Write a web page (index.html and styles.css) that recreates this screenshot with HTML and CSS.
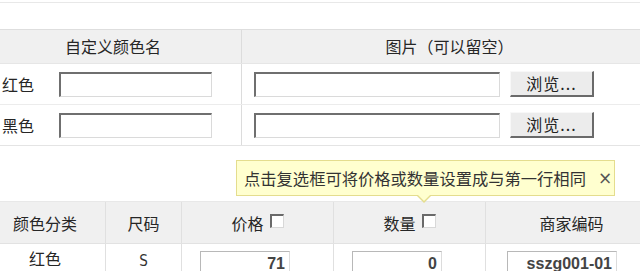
FILE: index.html
```html
<!DOCTYPE html>
<html lang="zh-CN">
<head>
<meta charset="utf-8">
<link rel="stylesheet" href="styles.css">
</head>
<body>
<div class="page">
  <div class="topline"></div>

  <div class="colors">
    <div class="c-row c-head">
      <div class="c-name">自定义颜色名</div>
      <div class="c-pic">图片（可以留空）</div>
    </div>
    <div class="c-row">
      <div class="c-name cell">
        <span class="lbl">红色</span>
        <span class="inset name-input"></span>
      </div>
      <div class="c-pic cell">
        <span class="inset file-input"></span>
        <span class="btn">浏览...</span>
      </div>
    </div>
    <div class="c-row">
      <div class="c-name cell">
        <span class="lbl">黑色</span>
        <span class="inset name-input"></span>
      </div>
      <div class="c-pic cell">
        <span class="inset file-input"></span>
        <span class="btn">浏览...</span>
      </div>
    </div>
  </div>

  <div class="gap">
    <div class="tip">
      <span class="tip-text">点击复选框可将价格或数量设置成与第一行相同</span>
      <span class="tip-close">×</span>
    </div>
  </div>

  <div class="sku">
    <div class="s-row s-head">
      <div class="s-col s1">颜色分类</div>
      <div class="s-col s2">尺码</div>
      <div class="s-col s3">价格 <span class="chk"></span></div>
      <div class="s-col s4">数量 <span class="chk"></span></div>
      <div class="s-col s5">商家编码</div>
    </div>
    <div class="s-row s-body">
      <div class="s-col s1 txt">红色</div>
      <div class="s-col s2 txt latin">S</div>
      <div class="s-col s3 left"><span class="num">71</span></div>
      <div class="s-col s4 left"><span class="num">0</span></div>
      <div class="s-col s5 left"><span class="num code">sszg001-01</span></div>
    </div>
  </div>
</div>
</body>
</html>
```

FILE: styles.css
```css
html, body {
  margin: 0;
  padding: 0;
  background: #fff;
  overflow: hidden;
}
body {
  width: 640px;
  height: 271px;
  font-family: "Noto Sans CJK SC", "Microsoft YaHei", sans-serif;
  font-size: 16px;
  color: #262626;
}
.page {
  width: 672px;
  margin-left: -15px;
}
.topline {
  height: 2px;
  border-bottom: 1px solid #e8e8e8;
  margin-bottom: 26px;
}

/* colour table */
.colors {
  border-top: 1px solid #dedede;
  border-bottom: 1px solid #e4e4e4;
}
.c-row {
  display: flex;
  height: 40px;
  border-bottom: 1px solid #ececec;
}
.c-row:last-child { border-bottom: none; }
.c-head {
  height: 33px;
  background: #f0f0f0;
  border-bottom: 1px solid #e6e6e6;
  line-height: 33px;
}
.c-name {
  width: 256px;
  border-right: 1px solid #dcdcdc;
  text-align: center;
}
.c-pic {
  flex: 1;
  text-align: center;
}
.cell {
  display: flex;
  align-items: center;
  text-align: left;
}
.c-name.cell { padding-left: 17px; width: 239px; }
.c-pic.cell { padding-left: 12px; }
.lbl {
  width: 57px;
  line-height: 20px;
}
.inset {
  display: block;
  box-sizing: border-box;
  height: 25px;
  background: #fff;
  border-top: 2px solid #6f6f6f;
  border-left: 2px solid #6f6f6f;
  border-right: 1px solid #dadada;
  border-bottom: 1px solid #dadada;
}
.name-input { width: 153px; }
.file-input { width: 246px; }
.btn {
  box-sizing: border-box;
  width: 84px;
  height: 26px;
  margin-left: 10px;
  background: #ececec;
  border-top: 1px solid #f8f8f8;
  border-left: 1px solid #f8f8f8;
  border-right: 2px solid #6a6a6a;
  border-bottom: 2px solid #6a6a6a;
  line-height: 22px;
  text-align: center;
  font-size: 16px;
  color: #222;
  letter-spacing: 1px;
}

/* gap + tooltip */
.gap {
  position: relative;
  height: 55px;
}
.tip {
  position: absolute;
  left: 251px;
  top: 14px;
  width: 379px;
  height: 36px;
  box-sizing: border-box;
  background: #ffffcf;
  border: 1px solid #e4dd8e;
  display: flex;
  align-items: center;
  padding-left: 7px;
  font-size: 16.3px;
  line-height: 20px;
  color: #333;
}
.tip::after {
  content: "";
  position: absolute;
  left: 179px;
  bottom: -8px;
  border-left: 8px solid transparent;
  border-right: 8px solid transparent;
  border-top: 8px solid #e4dd8e;
}
.tip::before {
  content: "";
  position: absolute;
  left: 180px;
  bottom: -6px;
  z-index: 1;
  border-left: 7px solid transparent;
  border-right: 7px solid transparent;
  border-top: 7px solid #ffffcf;
}
.tip-close {
  margin-left: 12px;
  font-family: "DejaVu Sans", sans-serif;
  font-size: 17px;
  color: #555;
}

/* sku table */
.sku {
  border-top: 1px solid #e8e8e8;
}
.s-row {
  display: flex;
}
.s-head {
  height: 41px;
  background: #f0f0f0;
  border-bottom: 1px solid #e2e2e2;
}
.s-body { height: 40px; }
.s-col {
  display: flex;
  align-items: center;
  justify-content: center;
  border-right: 1px solid #e0e0e0;
  line-height: 20px;
}
.s-col:last-child { border-right: none; }
.s1 { width: 120px; }
.s2 { width: 75px; }
.s3 { width: 151px; }
.s4 { width: 151px; }
.s5 { flex: 1; }
.s-head .s-col { padding-top: 1px; }
.s-body .s-col {
  align-items: flex-start;
  padding-top: 7px;
  height: 33px;
}
.s-body .s-col.txt {
  padding-top: 4px;
  height: 36px;
}
.s-body .s-col.latin {
  padding-top: 7px;
  height: 33px;
}
.s-col.left {
  justify-content: flex-start;
}
.s3.left, .s4.left { padding-left: 18px; width: 133px; }
.s5.left { padding-left: 21px; }
.latin {
  font-family: "DejaVu Sans Condensed", "DejaVu Sans", sans-serif;
  font-size: 15px;
  color: #333;
}
.chk {
  display: inline-block;
  width: 14px;
  height: 14px;
  margin-left: 6px;
  box-sizing: border-box;
  background: #fff;
  border-top: 2px solid #6a6a6a;
  border-left: 2px solid #6a6a6a;
  border-right: 1px solid #d8d8d8;
  border-bottom: 1px solid #d8d8d8;
  position: relative;
  top: -2px;
}
.num {
  display: block;
  box-sizing: border-box;
  width: 90px;
  height: 26px;
  border: 1px solid #b8b8b8;
  border-right-color: #dcdcdc;
  border-bottom-color: #dcdcdc;
  background: #fff;
  text-align: right;
  padding-right: 4px;
  padding-top: 2px;
  font-family: "Liberation Sans", Arial, sans-serif;
  font-weight: bold;
  font-size: 16px;
  line-height: 20px;
  color: #444;
}
.num.code { width: 110px; }
```
